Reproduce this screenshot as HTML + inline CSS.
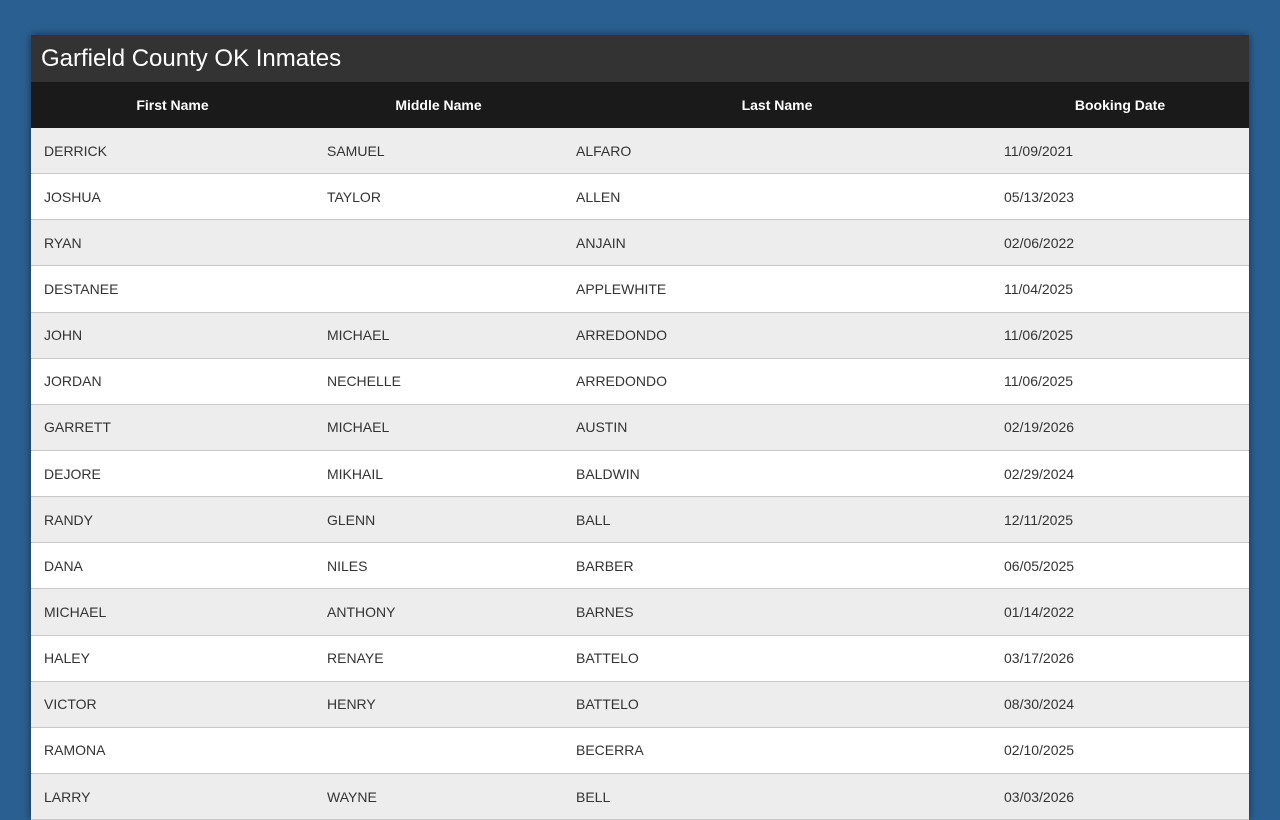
<!DOCTYPE html>
<html><head><style>
body{margin:0;background:#2a6091;font-family:"Liberation Sans",Arial,sans-serif;width:1280px;height:800px;overflow:hidden;position:relative}
.box{position:absolute;left:31px;top:35px;width:1218px;box-shadow:0 0 8px rgba(0,0,0,.5);background:#fff}
.title{height:47px;background:#333;color:#fff;font-size:24px;line-height:47px;padding-left:10px;box-sizing:border-box}
.row{display:flex;height:46.15px;box-sizing:border-box;border-bottom:1px solid #c8c8c8;font-size:14px;color:#333;align-items:center}
.row div{padding-left:13px;box-sizing:border-box}
.hd{background:#1a1a1a;color:#fff;font-weight:bold;border:none;height:46px}
.hd div{text-align:center;padding:0}
.c1{width:283px}.c2{width:249px}.c3{width:428px}.c4{width:258px}
.g{background:#ededed}
</style></head><body>
<div class="box">
<div class="title">Garfield County OK Inmates</div>
<div class="row hd"><div class="c1">First Name</div><div class="c2">Middle Name</div><div class="c3">Last Name</div><div class="c4">Booking Date</div></div>
<div class="row g"><div class="c1">DERRICK</div><div class="c2">SAMUEL</div><div class="c3">ALFARO</div><div class="c4">11/09/2021</div></div>
<div class="row"><div class="c1">JOSHUA</div><div class="c2">TAYLOR</div><div class="c3">ALLEN</div><div class="c4">05/13/2023</div></div>
<div class="row g"><div class="c1">RYAN</div><div class="c2"></div><div class="c3">ANJAIN</div><div class="c4">02/06/2022</div></div>
<div class="row"><div class="c1">DESTANEE</div><div class="c2"></div><div class="c3">APPLEWHITE</div><div class="c4">11/04/2025</div></div>
<div class="row g"><div class="c1">JOHN</div><div class="c2">MICHAEL</div><div class="c3">ARREDONDO</div><div class="c4">11/06/2025</div></div>
<div class="row"><div class="c1">JORDAN</div><div class="c2">NECHELLE</div><div class="c3">ARREDONDO</div><div class="c4">11/06/2025</div></div>
<div class="row g"><div class="c1">GARRETT</div><div class="c2">MICHAEL</div><div class="c3">AUSTIN</div><div class="c4">02/19/2026</div></div>
<div class="row"><div class="c1">DEJORE</div><div class="c2">MIKHAIL</div><div class="c3">BALDWIN</div><div class="c4">02/29/2024</div></div>
<div class="row g"><div class="c1">RANDY</div><div class="c2">GLENN</div><div class="c3">BALL</div><div class="c4">12/11/2025</div></div>
<div class="row"><div class="c1">DANA</div><div class="c2">NILES</div><div class="c3">BARBER</div><div class="c4">06/05/2025</div></div>
<div class="row g"><div class="c1">MICHAEL</div><div class="c2">ANTHONY</div><div class="c3">BARNES</div><div class="c4">01/14/2022</div></div>
<div class="row"><div class="c1">HALEY</div><div class="c2">RENAYE</div><div class="c3">BATTELO</div><div class="c4">03/17/2026</div></div>
<div class="row g"><div class="c1">VICTOR</div><div class="c2">HENRY</div><div class="c3">BATTELO</div><div class="c4">08/30/2024</div></div>
<div class="row"><div class="c1">RAMONA</div><div class="c2"></div><div class="c3">BECERRA</div><div class="c4">02/10/2025</div></div>
<div class="row g"><div class="c1">LARRY</div><div class="c2">WAYNE</div><div class="c3">BELL</div><div class="c4">03/03/2026</div></div>
</div>
</body></html>
